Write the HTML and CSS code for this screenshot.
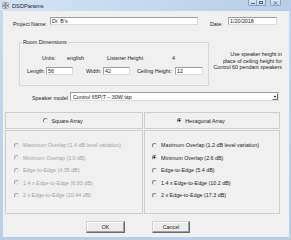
FILE: index.html
```html
<!DOCTYPE html>
<html>
<head>
<meta charset="utf-8">
<title>DSDParams</title>
<link rel="stylesheet" href="styles.css">
</head>
<body>
<div class="window">
  <div class="titlebar">
    <svg class="app-icon" viewBox="0 0 7 7" width="7" height="7">
      <rect x="0.5" y="0.5" width="6" height="6" rx="1" fill="#e8e8e8" stroke="#8a8a8a" stroke-width="0.6"/>
      <circle cx="3.5" cy="3.5" r="2" fill="none" stroke="#707070" stroke-width="0.7"/>
      <path d="M3.5 0.8V6.2M0.8 3.5H6.2" stroke="#707070" stroke-width="0.6"/>
    </svg>
    <span class="title">DSDParams</span>
    <div class="caption-btns">
      <span class="cbtn cbtn-min"><span class="glyph-min"></span></span>
      <span class="cbtn cbtn-max"><span class="glyph-max"></span></span>
      <span class="cbtn cbtn-close"><svg viewBox="0 0 5 4" width="5" height="4"><path d="M1 0.5L4 3.5M4 0.5L1 3.5" stroke="#55657a" stroke-width="0.9"/></svg></span>
    </div>
  </div>
  <div class="client">
    <div class="row-project">
      <span class="lbl lbl-project">Project Name:</span>
      <div class="field field-project">Dr. B's</div>
      <span class="lbl lbl-date">Date:</span>
      <div class="field field-date">1/20/2018</div>
    </div>

    <div class="row-room">
      <fieldset class="group">
        <legend>Room Dimensions</legend>
        <div class="row-units">
          <span class="u-units">Units:</span>
          <span class="u-english">english</span>
          <span class="u-listener">Listener Height:</span>
          <span class="u-value">4</span>
        </div>
        <div class="row-dims">
          <span class="lbl d-length">Length:</span>
          <div class="field field-dim">56</div>
          <span class="lbl d-width">Width:</span>
          <div class="field field-dim">42</div>
          <span class="lbl d-ceiling">Ceiling Height:</span>
          <div class="field field-ceiling">12</div>
        </div>
      </fieldset>
      <p class="note">Use speaker height in<br>place of ceiling height for<br>Control 60 pendant speakers</p>
    </div>

    <div class="row-speaker">
      <span class="lbl lbl-speaker">Speaker model</span>
      <div class="select">
        <span class="select-text">Control 65P/T – 30W tap</span>
        <span class="select-btn"><svg viewBox="0 0 5 5" width="5" height="5"><path d="M1 2H4L2.5 3.6Z" fill="#000"/></svg></span>
      </div>
    </div>

    <div class="panels">
      <div class="panel panel-left">
        <div class="panel-head">
          <span class="radio"></span><span class="head-text">Square Array</span>
        </div>
        <div class="panel-body disabled">
          <div class="opt"><span class="radio"></span><span>Maximum Overlap (1.4 dB level variation)</span></div>
          <div class="opt"><span class="radio"></span><span>Minimum Overlap (2.0 dB)</span></div>
          <div class="opt"><span class="radio"></span><span>Edge-to-Edge (4.35 dB)</span></div>
          <div class="opt"><span class="radio"></span><span>1.4 x Edge-to-Edge (6.83 dB)</span></div>
          <div class="opt"><span class="radio"></span><span>2 x Edge-to-Edge (10.44 dB)</span></div>
        </div>
      </div>
      <div class="panel panel-right">
        <div class="panel-head">
          <span class="radio checked"></span><span class="head-text">Hexagonal Array</span>
        </div>
        <div class="panel-body">
          <div class="opt"><span class="radio"></span><span>Maximum Overlap (1.2 dB level variation)</span></div>
          <div class="opt"><span class="radio checked"></span><span>Minimum Overlap (2.6 dB)</span></div>
          <div class="opt"><span class="radio"></span><span>Edge-to-Edge (5.4 dB)</span></div>
          <div class="opt"><span class="radio"></span><span>1.4 x Edge-to-Edge (10.2 dB)</span></div>
          <div class="opt"><span class="radio"></span><span>2 x Edge-to-Edge (17.3 dB)</span></div>
        </div>
      </div>
    </div>

    <div class="row-buttons">
      <button class="btn btn-ok">OK</button>
      <button class="btn btn-cancel">Cancel</button>
    </div>
  </div>
</div>
</body>
</html>
```

FILE: styles.css
```css
* { box-sizing: border-box; }
html, body { margin: 0; padding: 0; }
body {
  font-family: "Liberation Sans", Arial, sans-serif;
  font-size: 5.35px;
  line-height: 6px;
  color: #1c1c1c;
  background: #fff;
}

.window {
  width: 291px;
  height: 240px;
  display: flex;
  flex-direction: column;
  background: linear-gradient(to bottom, #c6d9ee 0, #b9cfe8 100%);
}

/* Title bar */
.titlebar {
  height: 11px;
  flex: none;
  display: flex;
  align-items: center;
  padding-left: 2px;
  background: linear-gradient(to right, #d3e3f4 0, #c4d8ee 50%, #b8cee8 100%);
}
.app-icon { display: block; flex: none; }
.title { margin-left: 3px; font-size: 5.7px; color: #1e1e1e; }
.caption-btns {
  margin-left: auto;
  margin-right: 10px;
  align-self: flex-start;
  display: flex;
}
.cbtn {
  height: 6px;
  display: flex;
  align-items: center;
  justify-content: center;
  border: 1px solid #8ea3bd;
  border-top: none;
  background: linear-gradient(#dce7f3, #c2d3e7);
}
.cbtn-min { width: 9px; border-radius: 0 0 0 2px; }
.cbtn-max { width: 9px; border-left: none; }
.cbtn-close { width: 11px; margin-left: 4px; border-radius: 0 0 2px 2px; }
.glyph-min { width: 4px; height: 1px; background: #55657a; margin-top: 2px; }
.glyph-max { width: 4px; height: 3px; border: 1px solid #55657a; }
.cbtn svg { display: block; }

/* Client area */
.client {
  flex: 1;
  margin: 0 2px 3px 3px;
  background: #f0f0f0;
  display: flex;
  flex-direction: column;
  padding-top: 6px;
}

.field {
  height: 8px;
  background: #fff;
  border: 1px solid #dcdcdc;
  border-top-color: #9d9d9d;
  border-left-color: #a8a8a8;
  padding: 0 1px;
  line-height: 6px;
  white-space: nowrap;
  overflow: hidden;
  flex: none;
}

.lbl { flex: none; white-space: nowrap; }

/* Project row */
.row-project {
  display: flex;
  align-items: flex-end;
  height: 8px;
  margin-left: 10px;
}
.lbl-project { width: 37px; margin-bottom: -2px; }
.field-project { width: 148px; }
.lbl-date { width: 18px; margin-left: 12px; margin-bottom: -2px; }
.field-date { width: 49px; }

/* Room dimensions */
.row-room {
  display: flex;
  padding-right: 7px;
}
.group {
  margin: 14px 0 0 16px;
  padding: 0;
  width: 190px;
  height: 47px;
  border: 1px solid #d3d9de;
  border-radius: 1px;
  flex: none;
  min-width: 0;
}
.group legend {
  padding: 0 1px;
  margin-left: 2px;
  line-height: 7px;
}
.row-units {
  display: flex;
  margin-top: 9px;
  height: 6px;
  white-space: nowrap;
}
.u-units { width: 25px; margin-left: 22px; }
.u-english { width: 40px; }
.u-listener { width: 65px; }
.row-dims {
  display: flex;
  align-items: center;
  margin-top: 6px;
  height: 8px;
}
.d-length { width: 19px; margin-left: 7px; }
.field-dim { width: 27px; }
.d-width { width: 17px; margin-left: 13px; }
.d-ceiling { width: 38px; margin-left: 7px; }
.field-ceiling { width: 28px; }

.note {
  flex: 1;
  margin: 26px 0 0 0;
  text-align: right;
  line-height: 6.5px;
  white-space: nowrap;
}

/* Speaker model */
.row-speaker {
  display: flex;
  align-items: center;
  margin-top: 6px;
  height: 9px;
}
.lbl-speaker { width: 38px; margin-left: 29px; margin-top: 2px; }
.select {
  width: 209px;
  height: 9px;
  background: #fff;
  border: 1px solid #dcdcdc;
  border-top-color: #9d9d9d;
  border-left-color: #a8a8a8;
  display: flex;
  align-items: center;
  padding-left: 2px;
}
.select-text { flex: 1; white-space: nowrap; }
.select-btn {
  width: 6px;
  height: 7px;
  display: flex;
  align-items: center;
  justify-content: center;
  background: #f0f0f0;
  border: 1px solid #fff;
  border-right-color: #6f6f6f;
  border-bottom-color: #6f6f6f;
}
.select-btn svg { display: block; }

/* Panels */
.panels {
  display: flex;
  gap: 1px;
  margin: 11px 0 0 2px;
}
.panel {
  display: flex;
  flex-direction: column;
  gap: 1px;
}
.panel-left { width: 138px; }
.panel-right { width: 136px; }
.panel-head {
  height: 17px;
  border: 1px solid #cdcdcd;
  display: flex;
  align-items: center;
  justify-content: center;
  padding-right: 22px;
}
.head-text { margin-left: 3px; white-space: nowrap; }
.panel-body {
  height: 84px;
  border: 1px solid #cdcdcd;
  padding: 11px 0 0 7px;
  display: flex;
  flex-direction: column;
  gap: 6.6px;
}
.panel-left .panel-body { padding-left: 8px; }
.opt {
  display: flex;
  align-items: center;
  height: 6px;
  white-space: nowrap;
}
.opt .radio { margin-right: 4px; }
.disabled { color: #a3a3a3; }

.radio {
  width: 5px;
  height: 5px;
  border-radius: 50%;
  border: 1px solid;
  border-color: #7b7b7b #e6e6e6 #e6e6e6 #7b7b7b;
  background: #fff;
  flex: none;
}
.disabled .radio {
  background: #f0f0f0;
  border-color: #a8a8a8 #e6e6e6 #e6e6e6 #a8a8a8;
}
.radio.checked {
  background: radial-gradient(circle, #000 0, #000 0.8px, #fff 1.3px);
}

/* Buttons */
.row-buttons {
  display: flex;
  margin: 7px 0 0 83px;
  gap: 27px;
}
.btn {
  height: 12px;
  padding: 0;
  font-family: "Liberation Sans", Arial, sans-serif;
  font-size: 5.35px;
  line-height: 6px;
  color: #1c1c1c;
  background: #ececec;
  border: 1px solid #d0d0d0;
  border-right-color: #6a6a6a;
  border-bottom-color: #6a6a6a;
  box-shadow: inset -1px -1px 0 #a0a0a0, inset 1px 1px 0 #fff;
}
.btn-ok { width: 39px; }
.btn-cancel { width: 38px; }
```
